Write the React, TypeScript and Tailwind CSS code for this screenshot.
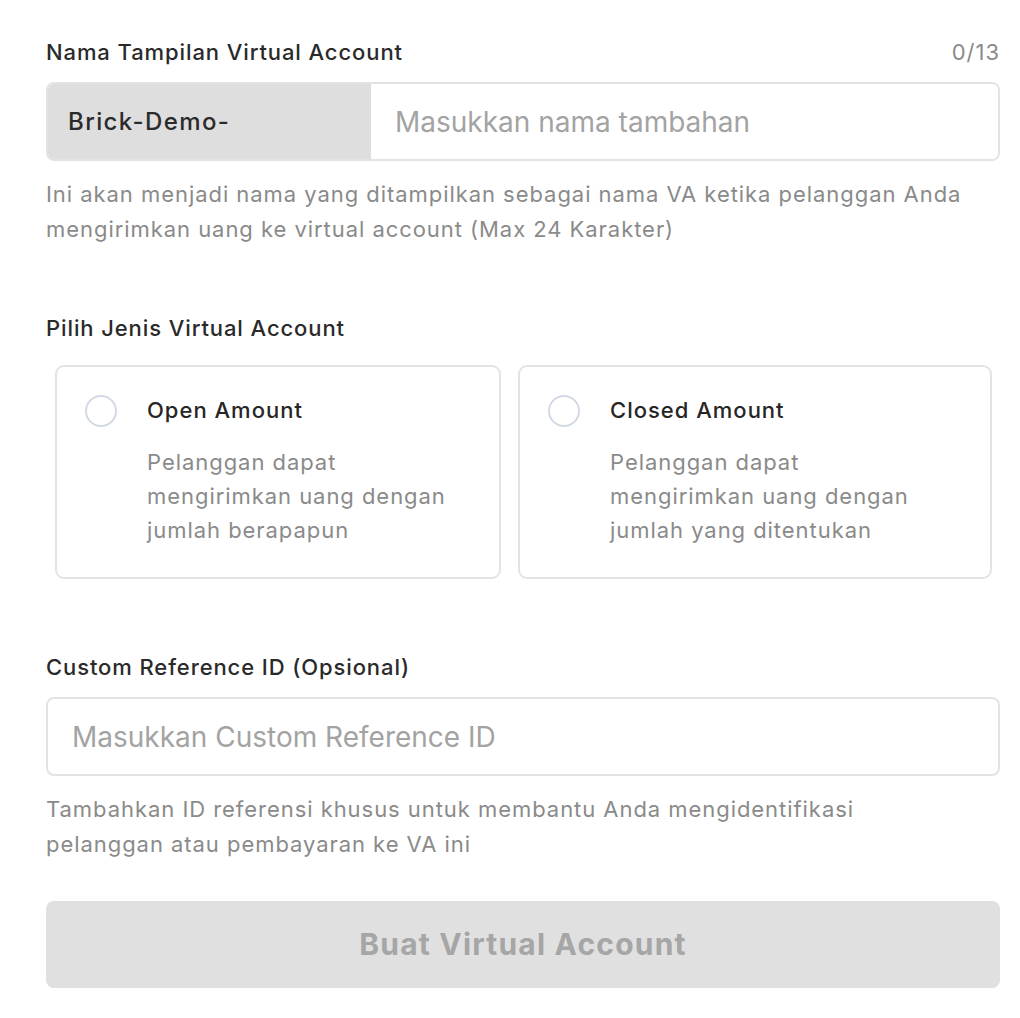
import { useState } from 'react';

const font = { fontFamily: 'Inter, "Noto Sans", sans-serif' };

function RadioCard({ title, desc, selected, onClick, className }: { title: string; desc: string; selected: boolean; onClick: () => void; className: string }) {
  return (
    <button
      type="button"
      onClick={onClick}
      className={`flex items-start text-left border-2 border-[#e3e3e3] rounded-[9px] bg-white pt-[26px] pb-[30px] pl-[28px] pr-6 ${className}`}
    >
      <span className={`mt-[2px] w-[32px] h-[32px] rounded-full border-2 shrink-0 ${selected ? 'border-[#2b6cb0]' : 'border-[#d3d9e4]'}`} />
      <span className="ml-[30px] flex flex-col max-w-[320px]">
        <span className="text-[22px] leading-[34px] font-medium tracking-[1px] text-[#262626]">{title}</span>
        <span className="mt-[18px] text-[22px] leading-[34px] tracking-[0.95px] text-[#8a8a8a]">{desc}</span>
      </span>
    </button>
  );
}

export default function App() {
  const [name, setName] = useState('');
  const [type, setType] = useState<string | null>(null);
  const [refId, setRefId] = useState('');

  return (
    <div style={font} className="bg-white w-[1020px] min-h-[1018px] pl-[46px] pr-[20px] pt-[34px]">
      <div className="flex justify-between items-center">
        <label className="text-[22px] leading-[36px] font-medium tracking-[0.9px] text-[#2a2a2a]">Nama Tampilan Virtual Account</label>
        <span className="text-[22px] leading-[36px] tracking-[1px] text-[#8a8a8a]">{name.length}/13</span>
      </div>
      <div className="mt-[12px] flex h-[79px] rounded-[8px] overflow-hidden border-2 border-[#e3e3e3]">
        <div className="w-[323px] bg-[#dedede] flex items-center pl-[20px] text-[24px] font-medium tracking-[1.4px] text-[#2b2b2b]">
          Brick-Demo-
        </div>
        <input
          value={name}
          maxLength={13}
          onChange={(e) => setName(e.target.value)}
          placeholder="Masukkan nama tambahan"
          className="flex-1 px-[24px] text-[28px] text-[#2b2b2b] placeholder:text-[#a3a3a3] outline-none bg-white"
        />
      </div>
      <p className="mt-[16px] text-[22px] leading-[35px] tracking-[0.95px] text-[#8a8a8a]">
        Ini akan menjadi nama yang ditampilkan sebagai nama VA ketika pelanggan Anda mengirimkan uang ke virtual account (Max 24 Karakter)
      </p>

      <h3 className="mt-[63px] text-[22px] leading-[36px] font-medium tracking-[0.9px] text-[#2a2a2a]">Pilih Jenis Virtual Account</h3>
      <div className="mt-[19px] flex gap-[17px] pl-[9px] pr-[8px]">
        <RadioCard
          className="w-[446px]"
          title="Open Amount"
          desc="Pelanggan dapat mengirimkan uang dengan jumlah berapapun"
          selected={type === 'open'}
          onClick={() => setType('open')}
        />
        <RadioCard
          className="flex-1"
          title="Closed Amount"
          desc="Pelanggan dapat mengirimkan uang dengan jumlah yang ditentukan"
          selected={type === 'closed'}
          onClick={() => setType('closed')}
        />
      </div>

      <h3 className="mt-[70px] text-[22px] leading-[36px] font-medium tracking-[0.9px] text-[#2a2a2a]">Custom Reference ID (Opsional)</h3>
      <input
        value={refId}
        onChange={(e) => setRefId(e.target.value)}
        placeholder="Masukkan Custom Reference ID"
        className="mt-[12px] w-full h-[79px] rounded-[8px] border-2 border-[#e3e3e3] px-[24px] text-[28px] text-[#2b2b2b] placeholder:text-[#a3a3a3] outline-none"
      />
      <p className="mt-[16px] max-w-[900px] text-[22px] leading-[35px] tracking-[0.95px] text-[#8a8a8a]">
        Tambahkan ID referensi khusus untuk membantu Anda mengidentifikasi pelanggan atau pembayaran ke VA ini
      </p>

      <button
        type="button"
        disabled
        className="mt-[39px] w-full h-[87px] rounded-[8px] bg-[#e0e0e0] text-[#a6a6a6] text-[30px] font-bold tracking-[1.2px]"
      >
        Buat Virtual Account
      </button>
    </div>
  );
}
